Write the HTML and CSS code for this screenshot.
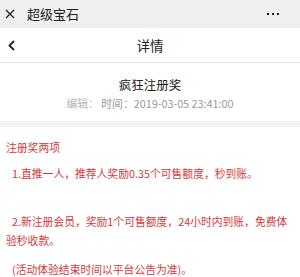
FILE: index.html
```html
<!DOCTYPE html>
<html lang="zh-CN">
<head>
  <meta charset="utf-8">
  <title>超级宝石</title>
  <meta name="viewport" content="width=device-width, initial-scale=1.0">
  <link rel="stylesheet" href="styles.css">
</head>
<body>
  <div class="titlebar">
    <svg class="close" width="10" height="10" viewBox="0 0 10 10">
      <path d="M1 1L9 9M9 1L1 9" stroke="#222" stroke-width="1.3" fill="none"/>
    </svg>
    <span class="app-name">超级宝石</span>
    <span class="more"><i></i><i></i><i></i></span>
  </div>

  <div class="navbar">
    <svg class="back" width="7" height="11" viewBox="0 0 7 11">
      <path d="M6 1L1.5 5.5L6 10" stroke="#222" stroke-width="1.8" fill="none"/>
    </svg>
    <span class="nav-title">详情</span>
  </div>

  <div class="article-head">
    <div class="article-title">疯狂注册奖</div>
    <div class="meta"><span class="editor">编辑：</span> 时间：2019-03-05 23:41:00</div>
  </div>

  <div class="notice">
    <p class="notice-head">注册奖两项</p>
    <p class="item gap">1.直推一人，推荐人奖励0.35个可售额度，秒到账。</p>
    <p class="item">2.新注册会员，奖励1个可售额度，24小时内到账，免费体验秒收款。</p>
    <p class="item">(活动体验结束时间以平台公告为准)。</p>
  </div>
</body>
</html>
```

FILE: styles.css
```css
body {
  margin: 0;
  background: #fff;
  font-family: "Noto Sans CJK SC", "Noto Sans", sans-serif;
  color: #222;
}

.titlebar {
  height: 28px;
  background: #efefef;
  display: flex;
  align-items: center;
  padding: 0 5px;
}

.titlebar .close {
  flex: none;
}

.app-name {
  margin-left: 12px;
  font-size: 13px;
  line-height: 28px;
}

.more {
  margin-left: auto;
  margin-right: 16px;
  display: flex;
  gap: 3px;
}

.more i {
  width: 2px;
  height: 2px;
  background: #222;
}

.navbar {
  height: 34px;
  border-bottom: 1px solid #e8e8e8;
  display: flex;
  align-items: center;
  padding: 0 8px;
  position: relative;
}

.nav-title {
  position: absolute;
  left: 0;
  right: 0;
  text-align: center;
  font-size: 13.5px;
  line-height: 34px;
}

.article-head {
  text-align: center;
  padding: 13px 0 10px;
  border-bottom: 6px solid #f3f3f3;
}

.article-title {
  font-size: 12.5px;
  line-height: 18px;
  color: #222;
}

.meta {
  margin-top: 1px;
  font-size: 10.8px;
  line-height: 16px;
  color: #999;
}

.meta .editor {
  color: #b5b5b5;
}

.notice {
  padding: 11px 6px 0;
  color: #d23a3a;
  font-size: 10.8px;
  line-height: 19px;
}

.notice p {
  margin: 0 0 10px;
}

.notice .notice-head {
  margin-bottom: 7px;
}

.notice .item {
  text-indent: 6px;
}

.notice .gap {
  margin-bottom: 29px;
}
```
